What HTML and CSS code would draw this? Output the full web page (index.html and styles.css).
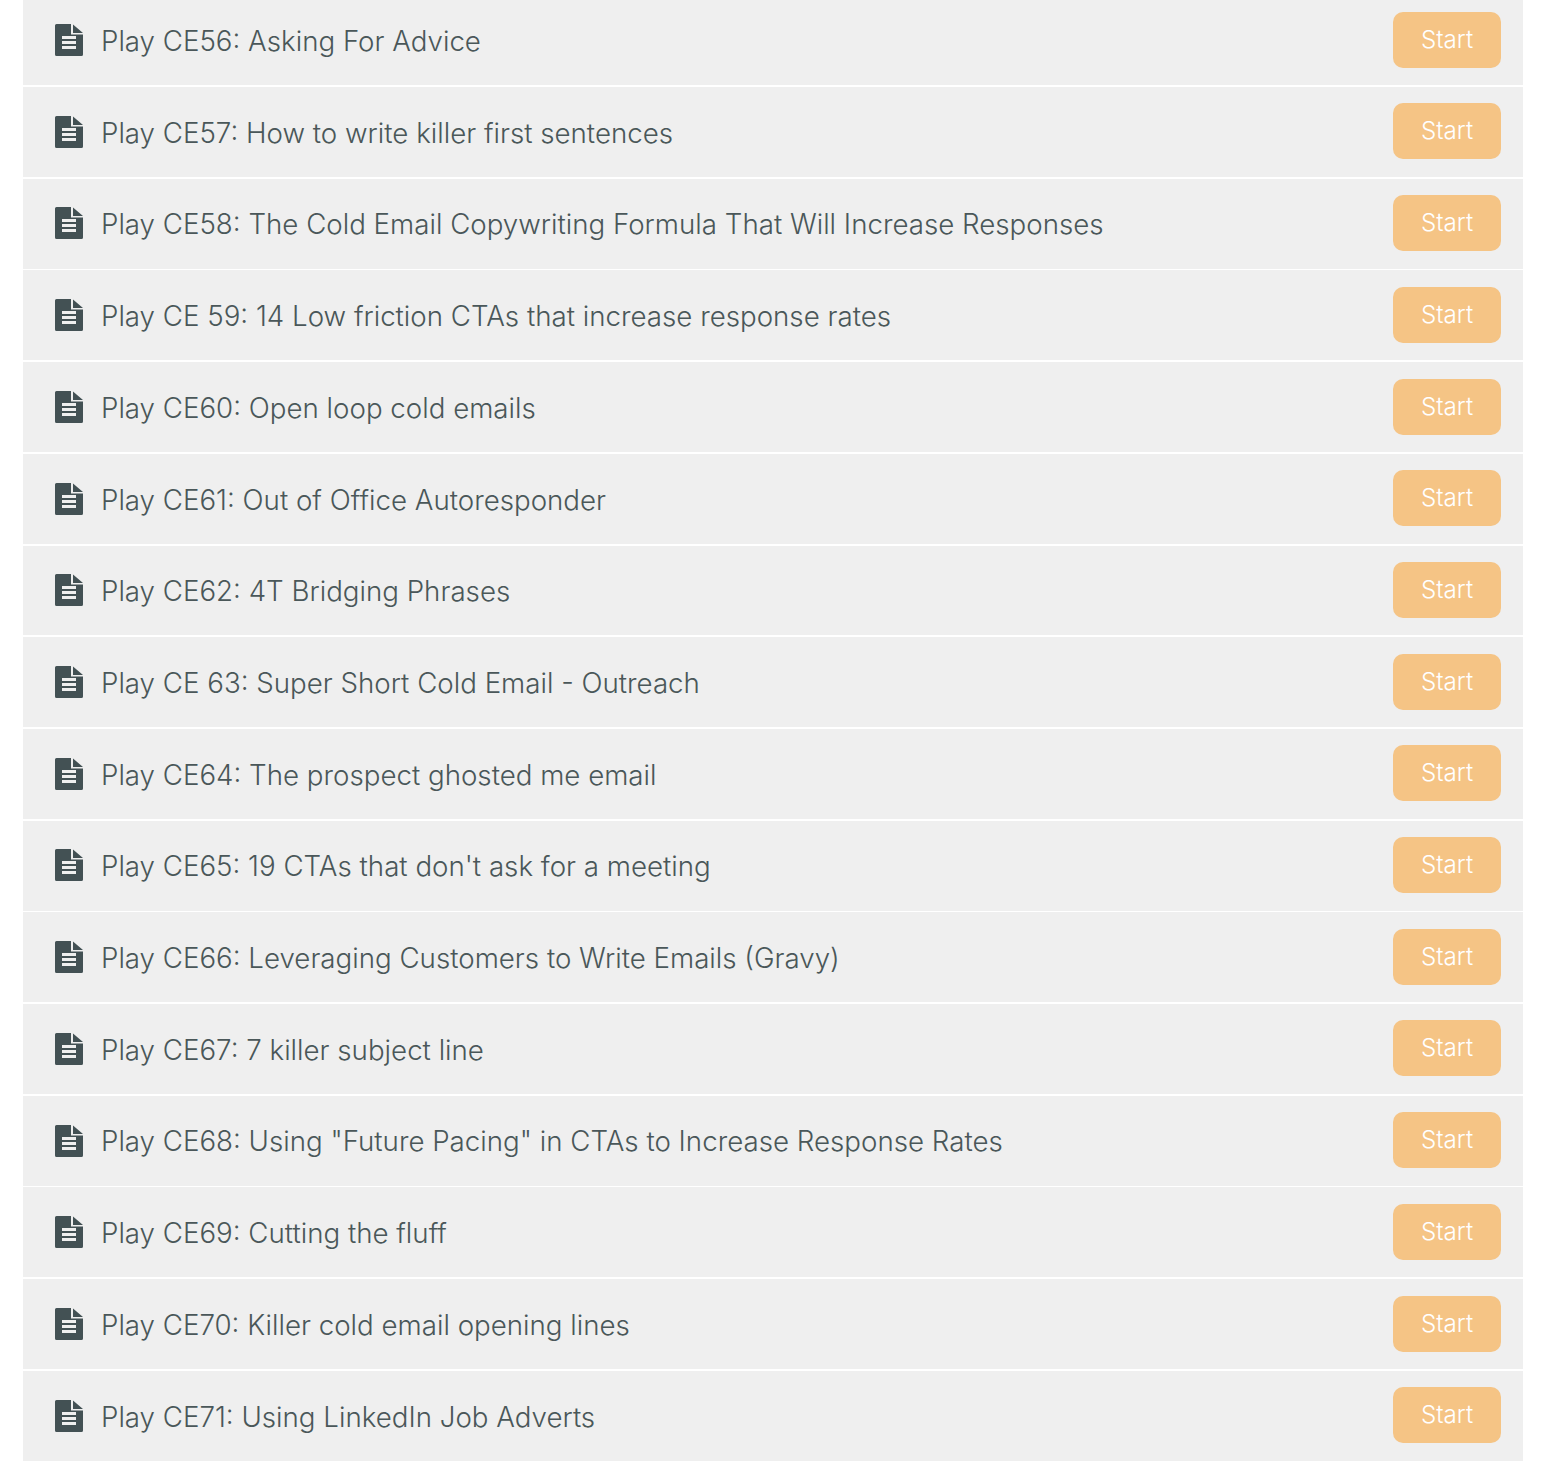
FILE: index.html
```html
<!DOCTYPE html>
<html lang="en">
<head>
<meta charset="utf-8">
<title>Plays</title>
<link rel="stylesheet" href="styles.css">
</head>
<body>
<svg class="defs" width="0" height="0"><symbol id="doc" viewBox="0 0 28 32"><path d="M1.500 0H16V10.500H28V30.500A1.500 1.500 0 0 1 26.500 32H1.500A1.500 1.500 0 0 1 0 30.500V1.500A1.500 1.500 0 0 1 1.500 0Z M7 12V15H21V12Z M7 17V20H21V17Z M7 22V25H21V22Z M18 0.500L28 9H18Z" fill-rule="evenodd"/></symbol></svg>
<ul class="list">
<li class="row"><svg class="icon"><use href="#doc"/></svg><span class="title">Play CE56: Asking For Advice</span><a class="btn">Start</a></li>
<li class="row"><svg class="icon"><use href="#doc"/></svg><span class="title">Play CE57: How to write killer first sentences</span><a class="btn">Start</a></li>
<li class="row"><svg class="icon"><use href="#doc"/></svg><span class="title">Play CE58: The Cold Email Copywriting Formula That Will Increase Responses</span><a class="btn">Start</a></li>
<li class="row"><svg class="icon"><use href="#doc"/></svg><span class="title">Play CE 59: 14 Low friction CTAs that increase response rates</span><a class="btn">Start</a></li>
<li class="row"><svg class="icon"><use href="#doc"/></svg><span class="title">Play CE60: Open loop cold emails</span><a class="btn">Start</a></li>
<li class="row"><svg class="icon"><use href="#doc"/></svg><span class="title">Play CE61: Out of Office Autoresponder</span><a class="btn">Start</a></li>
<li class="row"><svg class="icon"><use href="#doc"/></svg><span class="title">Play CE62: 4T Bridging Phrases</span><a class="btn">Start</a></li>
<li class="row"><svg class="icon"><use href="#doc"/></svg><span class="title">Play CE 63: Super Short Cold Email - Outreach</span><a class="btn">Start</a></li>
<li class="row"><svg class="icon"><use href="#doc"/></svg><span class="title">Play CE64: The prospect ghosted me email</span><a class="btn">Start</a></li>
<li class="row"><svg class="icon"><use href="#doc"/></svg><span class="title">Play CE65: 19 CTAs that don't ask for a meeting</span><a class="btn">Start</a></li>
<li class="row"><svg class="icon"><use href="#doc"/></svg><span class="title">Play CE66: Leveraging Customers to Write Emails (Gravy)</span><a class="btn">Start</a></li>
<li class="row"><svg class="icon"><use href="#doc"/></svg><span class="title">Play CE67: 7 killer subject line</span><a class="btn">Start</a></li>
<li class="row"><svg class="icon"><use href="#doc"/></svg><span class="title">Play CE68: Using "Future Pacing" in CTAs to Increase Response Rates</span><a class="btn">Start</a></li>
<li class="row"><svg class="icon"><use href="#doc"/></svg><span class="title">Play CE69: Cutting the fluff</span><a class="btn">Start</a></li>
<li class="row"><svg class="icon"><use href="#doc"/></svg><span class="title">Play CE70: Killer cold email opening lines</span><a class="btn">Start</a></li>
<li class="row"><svg class="icon"><use href="#doc"/></svg><span class="title">Play CE71: Using LinkedIn Job Adverts</span><a class="btn">Start</a></li>
</ul>
</body>
</html>
```
FILE: styles.css
```css
html, body { margin: 0; padding: 0; background: #fff; }
body { height: 1462px; overflow: hidden; }
.defs { position: absolute; }
.list {
  list-style: none;
  margin: -4.7px 27px 0 23px;
  padding: 0;
  display: flex;
  flex-direction: column;
  gap: 1.82px;
  font-family: "Inter", "Liberation Sans", sans-serif;
}
.row {
  height: 89.9px;
  background: #efefef;
  display: flex;
  align-items: center;
  padding: 0 22px 0 32px;
  box-sizing: border-box;
}
.icon { width: 28px; height: 32px; fill: #435154; flex: none; margin: -0.4px 18px 0 0; }
.title { flex: 1; padding-top: 1.6px; font-size: 27.7px; font-weight: 300; color: #4a5759; white-space: nowrap; }
.btn {
  flex: none;
  width: 108px;
  height: 56px;
  margin-top: -1px;
  border-radius: 10px;
  background: #f5c485;
  color: #fff;
  font-size: 24.2px;
  font-weight: 300;
  display: flex;
  align-items: center;
  justify-content: center;
  padding-bottom: 1px;
  box-sizing: border-box;
}
```
